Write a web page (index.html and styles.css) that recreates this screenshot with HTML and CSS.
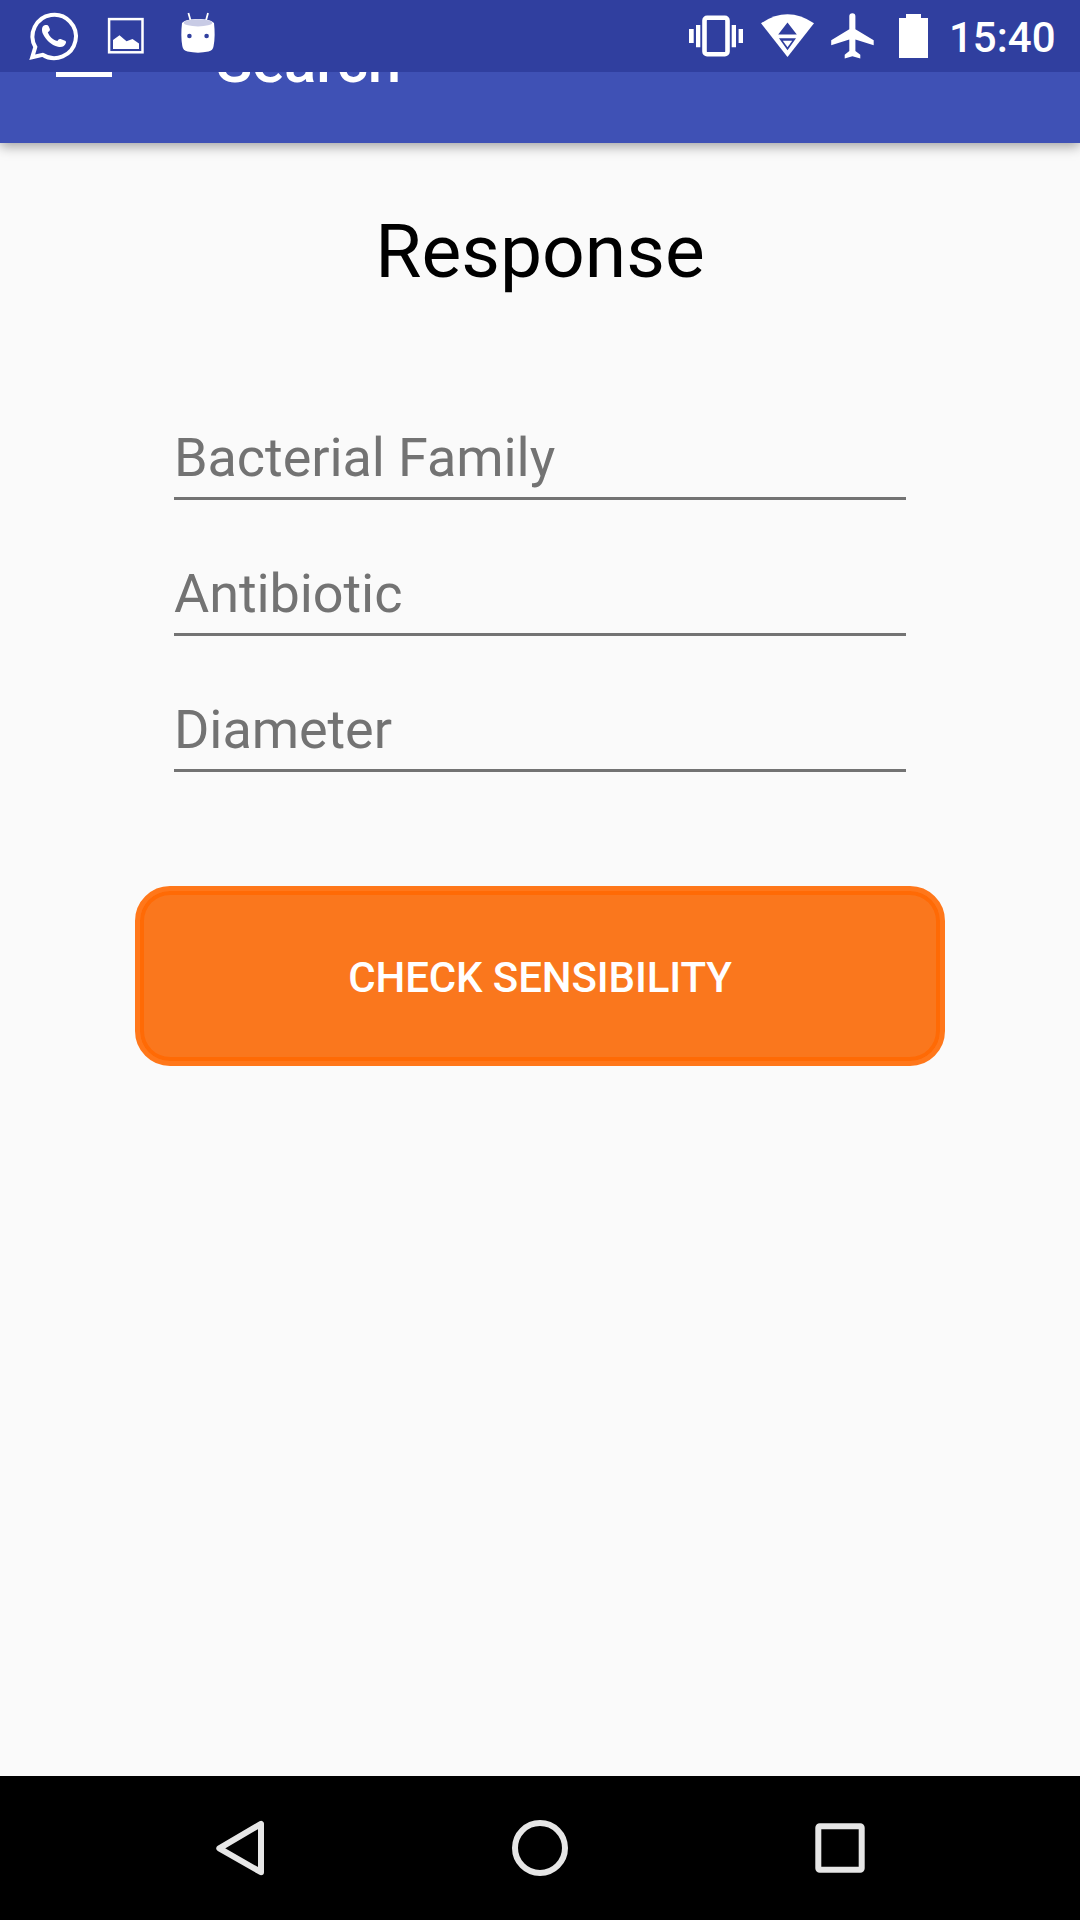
FILE: index.html
```html
<!DOCTYPE html>
<html lang="en">
<head>
<meta charset="utf-8">
<title>Search</title>
<link rel="stylesheet" href="styles.css">
</head>
<body>
<div class="screen">
  <div class="status-bar">
    <div class="status-group">
      <svg class="icon" viewBox="18 0 72 72">
        <path transform="translate(-0.6 -0.5)" d="M32.8 57.8 L35.9 47.6 A21.7 21.7 0 1 1 43.2 55.3 Z" fill="none" stroke="#fff" stroke-width="4"/>
        <path d="M44.5 25.3 C41.6 26.4 41.4 30.6 43 34 C46 40.2 51 45 58 46.8 C62 47.6 65 46.3 66 42.8 C66.2 41.4 65.6 41 64.4 40.6 L60.6 39 C59 38.6 58.4 39.7 57.4 41 C52.6 39.8 49.3 36.4 47.8 32.3 C49.4 31.2 50.2 30.4 49.8 29 L48.6 26.3 C47.9 24.8 46.2 24.8 44.5 25.3 Z" fill="#fff"/>
      </svg>
      <svg class="icon" viewBox="90 0 72 72">
        <rect x="109.1" y="19.1" width="33.4" height="33.2" fill="none" stroke="#fff" stroke-width="2.5"/>
        <path d="M113 49 V40 L119.5 35.2 L126.5 41.3 L132.5 39 L139 43.5 V49 Z" fill="#fff"/>
      </svg>
      <svg class="icon" viewBox="162 0 72 72">
        <path d="M188.4 13 L191 22 M208 13 L205.6 22" stroke="#fff" stroke-width="1.8"/>
        <path d="M182 23 C186 17.5 210 17.5 214 23 Q215.5 36 213.6 46 Q213 50.5 208.5 51.6 Q198 53.8 187.5 51.6 Q183 50.5 182.3 46 Q180.5 36 182 23 Z" fill="#fff"/>
        <ellipse cx="198" cy="22.8" rx="14.3" ry="3.6" fill="#c8cbe5"/>
        <circle cx="189.4" cy="36" r="2.3" fill="#303f9f"/>
        <circle cx="206.6" cy="36" r="2.3" fill="#303f9f"/>
      </svg>
    </div>
    <div class="status-group status-end">
      <svg class="icon" viewBox="680 0 72 72">
        <rect x="704.5" y="17.8" width="23" height="36.4" rx="2.6" fill="none" stroke="#fff" stroke-width="4.6"/>
        <path d="M689 29h4.7v14H689zM696 25h4.3v22.3H696zM731.7 25h4.3v22.3h-4.3zM738.6 29h4.4v14h-4.4z" fill="#fff"/>
      </svg>
      <svg class="icon" viewBox="752 0 72 72">
        <path d="M761 23.3 Q787.5 5.2 814 23.3 L787.5 57 Z" fill="#fff"/>
        <path d="M787.5 22.5 L796.8 34.5 H778.2 Z M779 38.3 H796 L787.5 50.3 Z" fill="#303f9f"/>
        <path d="M782.8 40.8 H792.2 L787.5 47.2 Z" fill="#fff"/>
      </svg>
      <svg class="icon icon-small" viewBox="824 0 60 72">
        <path d="M849.3 16.3 a3 3 0 0 1 6.1 0 V29.3 L873.7 40.2 V45.2 L855.4 39.5 V51 L860.3 54.8 V58.5 L852.4 56.3 L844.7 58.5 V54.8 L849.3 51 V39.5 L831.2 45.2 V40.2 L849.3 29.3 Z" fill="#fff"/>
      </svg>
      <svg class="icon icon-small" viewBox="884 0 60 72">
        <path d="M906 14h15v4h7v40h-29V18h7z" fill="#fff"/>
      </svg>
      <span class="clock">15:40</span>
    </div>
  </div>

  <div class="toolbar">
    <svg class="menu-icon" viewBox="0 0 72 72">
      <path d="M8 18h56v6H8zM8 33h56v6H8zM8 48h56v6H8z" fill="#fff"/>
    </svg>
    <span class="toolbar-title">Search</span>
  </div>

  <main class="content">
    <h1 class="heading">Response</h1>
    <div class="form">
      <div class="field">Bacterial Family</div>
      <div class="field">Antibiotic</div>
      <div class="field">Diameter</div>
    </div>
    <button class="check-button"><span class="check-label">CHECK SENSIBILITY</span></button>
  </main>

  <div class="nav-bar">
    <svg class="nav-icon" viewBox="0 0 84 84">
      <path d="M63 17.8 V66.2 L21.3 42.3 Z" fill="none" stroke="#e6e6e6" stroke-width="6" stroke-linejoin="round"/>
    </svg>
    <svg class="nav-icon" viewBox="0 0 84 84">
      <circle cx="42" cy="42" r="25" fill="none" stroke="#e6e6e6" stroke-width="6"/>
    </svg>
    <svg class="nav-icon" viewBox="0 0 84 84">
      <rect x="20.3" y="20.3" width="43.4" height="43.4" rx="1.5" fill="none" stroke="#e6e6e6" stroke-width="6"/>
    </svg>
  </div>
</div>
</body>
</html>
```
FILE: styles.css
```css
* {
  box-sizing: border-box;
}

body {
  margin: 0;
  font-family: Roboto, sans-serif;
}

.screen {
  display: flex;
  flex-direction: column;
  width: 1080px;
  height: 1920px;
  background: #fafafa;
  overflow: hidden;
}

.status-bar {
  position: relative;
  z-index: 1;
  display: flex;
  justify-content: space-between;
  flex: none;
  height: 72px;
  padding: 0 24px 0 18px;
  background: #303f9f;
}

.status-group {
  display: flex;
}

.icon {
  display: block;
  width: 72px;
  height: 72px;
}

.icon-small {
  width: 60px;
}

.clock {
  width: 112px;
  padding: 2px 0 0 5px;
  color: #fff;
  font-size: 42px;
  font-weight: 500;
  line-height: 72px;
}

.toolbar {
  display: flex;
  align-items: flex-end;
  flex: none;
  height: 71px;
  padding: 0 48px 30px;
  background: #3f51b5;
  box-shadow: 0 3px 12px rgba(0, 0, 0, 0.38);
}

.menu-icon {
  flex: none;
  width: 72px;
  height: 72px;
  margin-bottom: 18px;
}

.toolbar-title {
  margin: 0 0 11px 96px;
  color: #fff;
  font-size: 60px;
  font-weight: 500;
  letter-spacing: -0.2px;
  line-height: 80px;
}

.content {
  display: flex;
  flex-direction: column;
  align-items: center;
  flex: 1;
  padding-top: 64px;
}

.heading {
  margin: 0;
  color: #000;
  font-size: 75px;
  font-weight: 400;
  line-height: 88px;
}

.form {
  display: flex;
  flex-direction: column;
  gap: 62px;
  width: 732px;
  margin-top: 131px;
}

.field {
  height: 74px;
  border-bottom: 3px solid #737373;
  color: #737373;
  font-size: 54px;
  letter-spacing: -0.08px;
  line-height: 64px;
}

.check-button {
  width: 810px;
  height: 180px;
  margin-top: 114px;
  padding: 3px 0 0;
  border: 5px solid #ff771a;
  border-radius: 35px;
  background: #fa771d;
  box-shadow: inset 0 0 0 4px #ff6a05;
  color: #fff;
  font-family: inherit;
  font-size: 42px;
  font-weight: 500;
  letter-spacing: -0.12px;
}

.nav-bar {
  display: flex;
  justify-content: center;
  align-items: center;
  gap: 216px;
  flex: none;
  height: 144px;
  background: #000;
}

.nav-icon {
  width: 84px;
  height: 84px;
}
```
